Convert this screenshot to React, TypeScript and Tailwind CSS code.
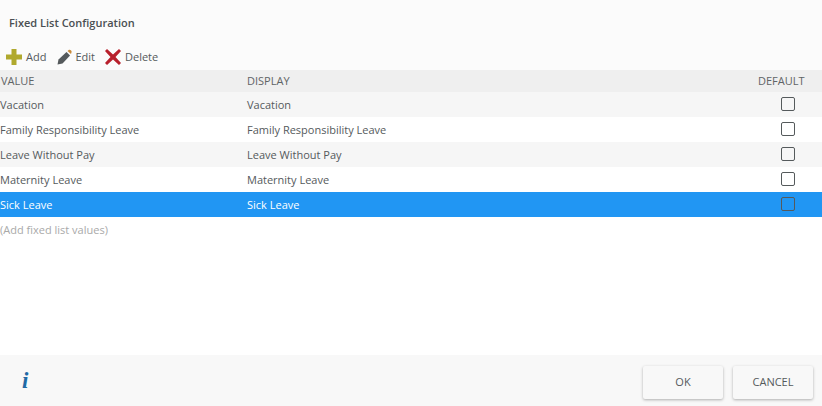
const rows = [
  "Vacation",
  "Family Responsibility Leave",
  "Leave Without Pay",
  "Maternity Leave",
  "Sick Leave",
];

function PlusIcon() {
  return (
    <svg width="16" height="16" viewBox="0 0 16 16">
      <path d="M5.5 0 H10.5 V5.5 H16 V10.5 H10.5 V16 H5.5 V10.5 H0 V5.5 H5.5 Z" fill="#b0a92e" />
    </svg>
  );
}

function PencilIcon() {
  return (
    <svg width="16" height="16" viewBox="0 0 16 16">
      <path d="M0.5 15.5 L1.5 10.5 L9.5 3 L13 6.5 L5.5 14.5 Z" fill="#555a5c" />
      <path d="M10.5 2 L12 0.8 C13 0.2 15 1.8 14.6 3 L14 5 Z" fill="#c98a3a" />
    </svg>
  );
}

function DeleteIcon() {
  return (
    <svg width="16" height="16" viewBox="0 0 16 16">
      <path
        d="M0 2 L2 0 L8 5.5 L14 0 L16 2 L10.5 8 L16 14 L14 16 L8 10.5 L2 16 L0 14 L5.5 8 Z"
        fill="#b8202c"
      />
    </svg>
  );
}

export default function App() {
  return (
    <div className="flex h-[406px] w-[822px] flex-col bg-white font-['Open_Sans',sans-serif] text-[11px] text-[#555a5c]">
      {/* Title + toolbar */}
      <div className="h-[70px] bg-[#fbfbfb]">
        <h1 className="pl-[9px] pt-[15px] text-[11px] leading-[16px] font-semibold text-[#4a4f52]">
          Fixed List Configuration
        </h1>
        <div className="flex items-center pl-[6px] pt-[18px] leading-[16px]">
          <PlusIcon />
          <span className="ml-[4px]">Add</span>
          <span className="ml-[11px] flex">
            <PencilIcon />
          </span>
          <span className="ml-[2px]">Edit</span>
          <span className="ml-[10px] flex">
            <DeleteIcon />
          </span>
          <span className="ml-[4px]">Delete</span>
        </div>
      </div>

      {/* Column headers */}
      <div className="flex h-[22px] items-center bg-[#efefef] pl-[1px] text-[#5f6466]">
        <div className="w-[246px]">VALUE</div>
        <div className="flex-1">DISPLAY</div>
        <div className="w-[64px]">DEFAULT</div>
      </div>

      {/* Rows */}
      {rows.map((row, i) => {
        const selected = i === 4;
        return (
          <div
            key={row}
            className={`flex h-[25px] items-center ${
              selected ? "bg-[#2196f3] text-white" : i % 2 === 0 ? "bg-[#f6f6f6]" : "bg-white"
            }`}
          >
            <div className="w-[247px] pt-[1px]">{row}</div>
            <div className="flex-1 pt-[1px]">{row}</div>
            <div className="w-[41px]">
              <div className="mb-[1px] h-[14px] w-[14px] rounded-[2px] border border-[#555a5c]" />
            </div>
          </div>
        );
      })}

      <div className="flex-1 pt-[5px] leading-[16px] text-[#a9a9a9]">(Add fixed list values)</div>

      {/* Footer */}
      <div className="flex h-[51px] items-start justify-between bg-[#f8f8f8] pl-[22px] pr-[9px]">
        <span className="pt-[14px] font-['Liberation_Serif',serif] text-[23px] leading-[23px] font-bold text-[#1f6aa5] italic">
          i
        </span>
        <div className="flex gap-[10px] pt-[11px]">
          <button className="h-[33px] w-[80px] rounded-[2px] bg-[#f8f8f8] pb-[1px] shadow-[0_1px_3px_rgba(0,0,0,0.3)]">
            OK
          </button>
          <button className="h-[33px] w-[80px] rounded-[2px] bg-[#f8f8f8] pb-[1px] shadow-[0_1px_3px_rgba(0,0,0,0.3)]">
            CANCEL
          </button>
        </div>
      </div>
    </div>
  );
}
